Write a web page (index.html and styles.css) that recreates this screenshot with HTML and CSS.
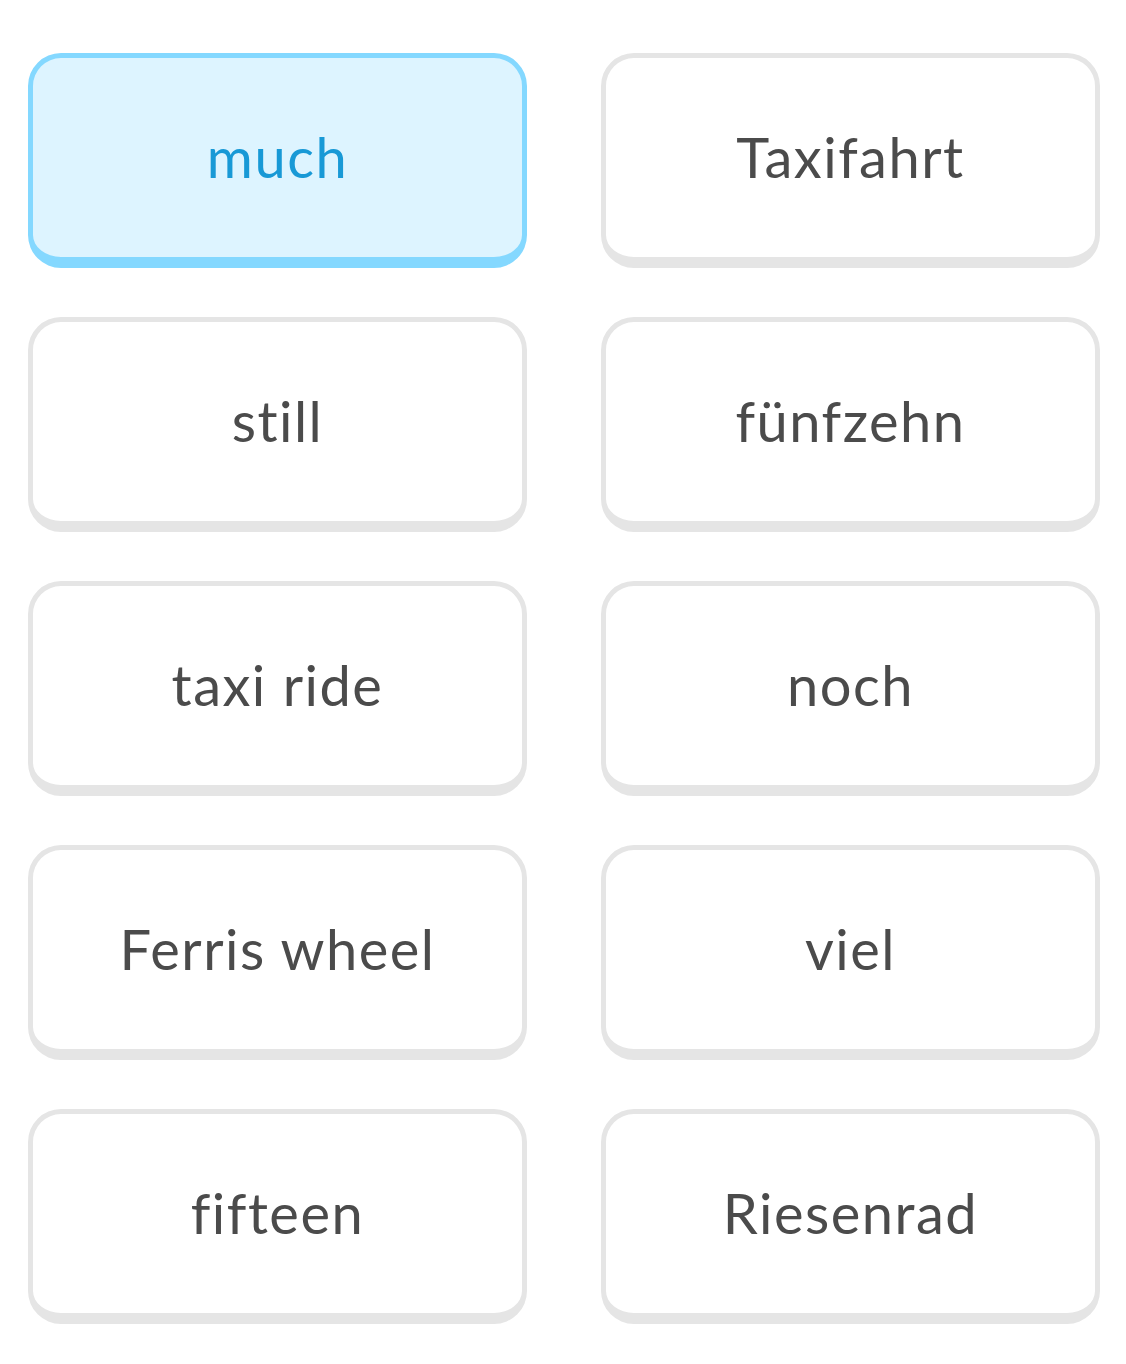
FILE: index.html
```html
<!DOCTYPE html>
<html>
<head>
<meta charset="utf-8">
<link rel="stylesheet" href="styles.css">
</head>
<body>
<div class="grid">
  <button class="card selected">much</button>
  <button class="card">Taxifahrt</button>
  <button class="card">still</button>
  <button class="card">fünfzehn</button>
  <button class="card">taxi ride</button>
  <button class="card">noch</button>
  <button class="card">Ferris wheel</button>
  <button class="card">viel</button>
  <button class="card">fifteen</button>
  <button class="card">Riesenrad</button>
</div>
</body>
</html>
```
FILE: styles.css
```css
html, body {
  margin: 0;
  padding: 0;
  background: #ffffff;
}
.grid {
  display: grid;
  grid-template-columns: 499px 499px;
  grid-auto-rows: 215px;
  column-gap: 74px;
  row-gap: 49px;
  padding: 53px 0 0 28px;
}
.card {
  box-sizing: border-box;
  display: flex;
  align-items: center;
  justify-content: center;
  background: #ffffff;
  border: 5px solid #e5e5e5;
  border-bottom-width: 11px;
  border-radius: 33px;
  font-family: "Lato", "Noto Sans", sans-serif;
  font-size: 56px;
  font-weight: 400;
  letter-spacing: 1.5px;
  font-variant-ligatures: none;
  color: #4b4b4b;
  padding: 0 0 2px 0;
  margin: 0;
}
.card.selected {
  background: #ddf4ff;
  border-color: #84d8ff;
  color: #1899d6;
}
```
